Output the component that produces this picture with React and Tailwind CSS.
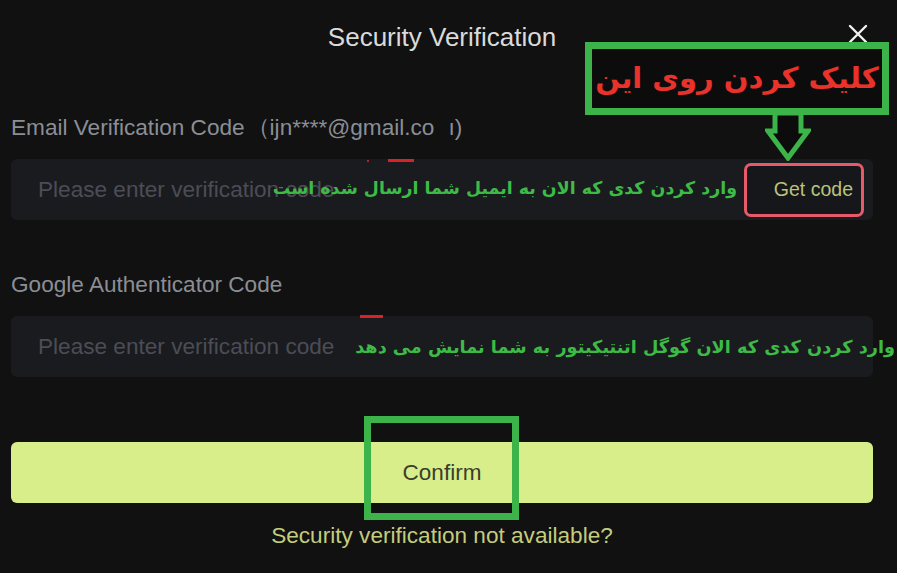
import { useState } from 'react';

const fa = { fontFamily: '"DejaVu Sans", "Noto Sans", sans-serif' };

function Field({ label, extra, children }) {
  return (
    <>
      <label className="block text-[22.6px] leading-[24px] text-[#8b8e95]">
        {label}
        {extra}
      </label>
      <div className="mt-[19px] flex h-[61px] items-center rounded-[6px] bg-[#1a1b1f] pl-[27px]">
        {children}
      </div>
    </>
  );
}

export default function App() {
  const [email, setEmail] = useState('');
  const [google, setGoogle] = useState('');

  return (
    <div
      className="relative min-h-screen w-full overflow-hidden bg-[#111111] pb-[20px] pl-[11px] pr-[24px] pt-[22px]"
      style={{ fontFamily: '"Liberation Sans", Arial, sans-serif' }}
    >
      <header className="relative flex h-[30px] items-center justify-center">
        <h1 className="text-[26px] leading-[30px] text-[#dadada]">Security Verification</h1>
        <button className="absolute right-[5px] top-[2px] h-[20px] w-[20px] text-[#f2f2f2]">
          <svg viewBox="0 0 20 20" className="h-full w-full" fill="none" stroke="currentColor" strokeWidth="2.4" strokeLinecap="round">
            <path d="M2 2 L18 18 M18 2 L2 18" />
          </svg>
        </button>
      </header>

      <div className="mt-[64px]">
        <Field
          label="Email Verification Code"
          extra={
            <span className="ml-[2px]">
              （ijn****@gmail.co<span className="ml-[14px]">ı)</span>
            </span>
          }
        >
          <input
            value={email}
            onChange={(e) => setEmail(e.target.value)}
            placeholder="Please enter verification code"
            className="w-[340px] bg-transparent text-[22.6px] text-[#d0d0d0] outline-none placeholder:text-[#4a4d56]"
          />
          <button className="ml-auto mr-[9px] flex h-[54px] w-[120px] items-center justify-end rounded-[7px] border-[3px] border-[#e85a6a] bg-[#16171a] pr-[8px] text-[19.5px] text-[#bcc27a]">
            Get code
          </button>
        </Field>
      </div>

      <div className="mt-[53px]">
        <Field label="Google Authenticator Code">
          <input
            value={google}
            onChange={(e) => setGoogle(e.target.value)}
            placeholder="Please enter verification code"
            className="w-[340px] bg-transparent text-[22.6px] text-[#d0d0d0] outline-none placeholder:text-[#4a4d56]"
          />
        </Field>
      </div>

      <button className="mt-[65px] flex h-[61px] w-full items-center justify-center rounded-[6px] bg-[#d8ee8a] text-[22.5px] text-[#3a3e2e]">
        Confirm
      </button>

      <p className="mt-[21px] text-center text-[22.6px] leading-[24px] text-[#c3cd7d]">
        Security verification not available?
      </p>

      {/* annotations drawn over the screenshot */}
      <div className="absolute left-[367px] top-[160px] h-[2px] w-[2px] bg-[#b5202a]" />
      <div className="absolute left-[388px] top-[159px] h-[3px] w-[26px] bg-[#d8222a]" />
      <div className="absolute left-[360px] top-[315px] h-[3px] w-[23px] bg-[#d8222a]" />

      <div
        dir="rtl"
        className="absolute right-[160px] top-[175px] whitespace-nowrap text-[17.4px] font-bold leading-[26px] text-[#3dbb46]"
        style={fa}
      >
        وارد کردن کدی که الان به ایمیل شما ارسال شده است
      </div>
      <div
        dir="rtl"
        className="absolute right-[2px] top-[334px] whitespace-nowrap text-[17.7px] font-bold leading-[26px] text-[#3dbb46]"
        style={fa}
      >
        وارد کردن کدی که الان گوگل اتنتیکیتور به شما نمایش می دهد
      </div>

      <div className="absolute left-[585px] top-[42px] flex h-[73px] w-[304px] items-center justify-center border-[7px] border-[#3db449] bg-[#0c0c0c]">
        <span dir="rtl" className="whitespace-nowrap text-[29px] font-bold leading-none text-[#e8322a]" style={fa}>
          کلیک کردن روی این
        </span>
      </div>

      <svg className="absolute left-[765px] top-[112px] h-[49px] w-[46px]" viewBox="0 0 46 49">
        <path
          d="M10 1 H36 V19 H43 L23 46 L3 19 H10 Z"
          fill="#0c0c0c"
          stroke="#3db449"
          strokeWidth="5"
          strokeLinejoin="miter"
        />
      </svg>

      <div className="absolute left-[364px] top-[416px] h-[104px] w-[155px] border-[7px] border-[#3db449]" />
    </div>
  );
}
